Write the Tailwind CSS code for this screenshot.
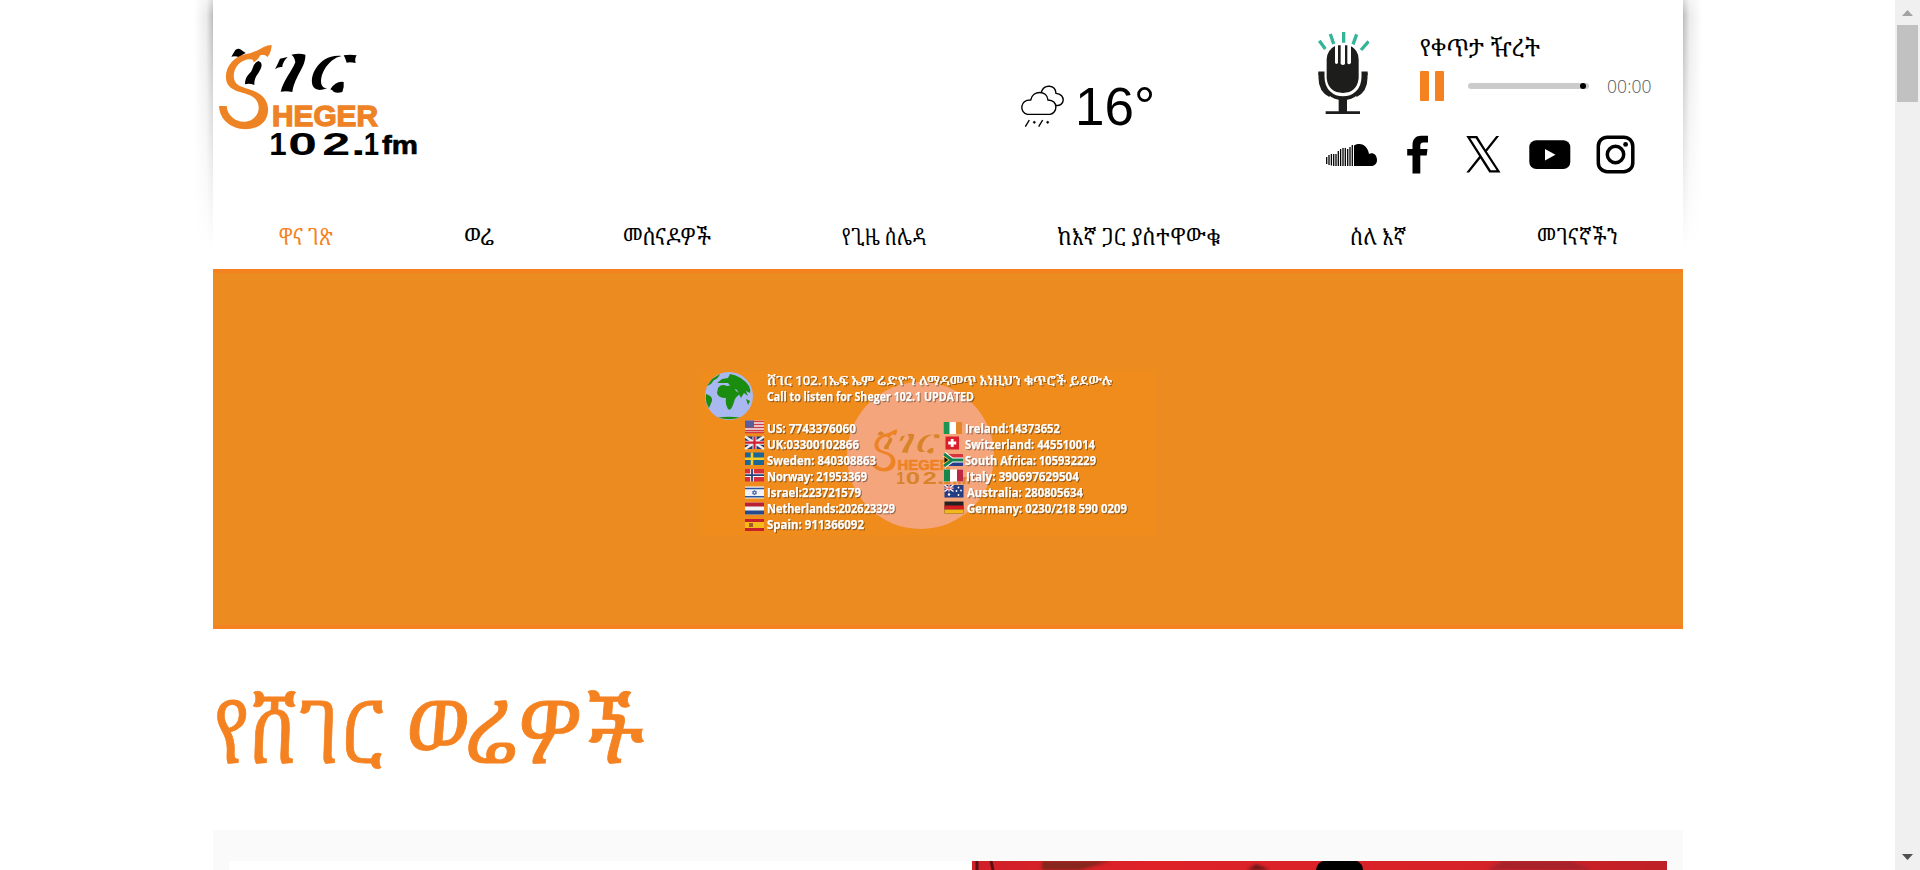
<!DOCTYPE html>
<html lang="am">
<head>
<meta charset="utf-8">
<title>ሸገር 102.1</title>
<script src="https://cdn.jsdelivr.net/npm/@tailwindcss/browser@4"></script>
</head>
<body class="bg-white text-black overflow-hidden font-['Noto_Serif_Ethiopic','Noto_Sans_Ethiopic','Noto_Sans',serif]">
<svg class="hidden">
  <symbol id="logo" viewBox="0 0 780 540">
    <g>
      <path d="M124 170L136 150Q146 142 154 150L167 159Q156 163 149 173Q136 166 124 170Z"/>
      <path d="M205 183Q219 188 213 204C205 224 192 230 193 255Q178 249 165 253C165 224 181 224 187 207Q190 190 205 183Z"/>
      <path d="M255 208Q264 190 270 176L293 171Q277 187 277 201Q264 200 255 208Z"/>
      <path d="M304 164Q328 158 346 164C348 201 315 225 307 276Q289 272 272 275C282 238 304 217 316 187Q314 171 304 164Z"/>
      <path d="M455 168C390 159 351 231 371 262Q382 277 411 265C381 263 391 211 425 182Q440 170 455 168Z"/>
      <path d="M461 166Q480 162 500 166Q493 177 497 189Q480 185 470 188Q466 174 461 166Z"/>
      <path d="M421 268Q437 242 461 246Q463 263 457 276Q442 281 432 276Q427 270 421 268Z"/>
      <g font-family="Liberation Sans" font-weight="700" font-size="94">
        <text x="238" y="464">1</text>
        <text x="295" y="464" textLength="86" lengthAdjust="spacingAndGlyphs">0</text>
        <text x="397" y="464" textLength="84" lengthAdjust="spacingAndGlyphs">2</text>
        <text x="483" y="464" textLength="44" lengthAdjust="spacingAndGlyphs">.</text>
        <text x="521" y="464" textLength="46" lengthAdjust="spacingAndGlyphs">1</text>
      </g>
      <text x="576" y="463" font-family="Liberation Sans" font-weight="700" font-size="80" textLength="108" lengthAdjust="spacingAndGlyphs" stroke="currentColor" stroke-width="2">fm</text>
    </g>
    <g fill="#ee8326">
      <path d="M245 135Q244 157 233 171Q222 161 211 166Q205 180 191 187Q190 177 180 178C150 178 127 207 132 235C137 268 180 260 213 285C247 312 238 366 202 380C150 402 89 373 87 318H110C112 354 151 376 184 360C211 344 213 310 192 293C166 273 118 279 109 242C101 203 132 169 168 162C193 157 207 149 221 141Q232 135 245 135Z"/>
      <text x="246" y="377" font-family="Liberation Sans" font-weight="700" font-size="90" textLength="318" lengthAdjust="spacingAndGlyphs" stroke="#ee8326" stroke-width="4">HEGER</text>
    </g>
  </symbol>
</svg>
<div class="flex h-[870px] w-[1920px]">
  <div class="relative flex w-[1895px] flex-col pl-[213px] pr-[212px]">
    <div class="absolute left-[194px] top-0 h-[250px] w-[19px] bg-linear-to-l from-[#bcbcbc] via-[#ebebeb] via-35% to-white [mask-image:linear-gradient(to_bottom,#0008,#000_6%,#0009_40%,#0004_70%,transparent)]"></div>
    <div class="absolute left-[1683px] top-0 h-[250px] w-[19px] bg-linear-to-r from-[#bcbcbc] via-[#ebebeb] via-35% to-white [mask-image:linear-gradient(to_bottom,#0008,#000_6%,#0009_40%,#0004_70%,transparent)]"></div>

    <header class="flex h-[200px] w-[1470px] items-start">
      <svg class="-ml-[23px] h-[180px] w-[260px] shrink-0 overflow-visible fill-black" viewBox="0 0 780 540"><use href="#logo"/></svg>
      <div class="ml-[570px] mt-[80px] flex h-[60px] w-[140px] items-start">
        <svg class="mt-[4px] h-[44px] w-[46px] shrink-0" viewBox="60 42 138 132" fill="none" stroke="#000" stroke-width="4.2">
          <path d="M82 133C58 128 59 89 92 90C98 60 141 60 144 90C177 92 172 130 150 133Z"/>
          <path d="M124 66C133 41 166 44 168 70C199 72 195 112 166 106"/>
          <path d="M88 150L76 170M128 150L116 170"/><circle cx="103" cy="157" r="3" fill="#000" stroke-width="2"/><circle cx="143" cy="157" r="3" fill="#000" stroke-width="2"/>
        </svg>
        <span class="ml-[9px] font-['Liberation_Sans',sans-serif] text-[53px] leading-[54px]">16°</span>
      </div>
      <div class="ml-[150px] flex w-[373px] flex-col">
        <div class="flex h-[122px] items-start pt-[30px]">
          <svg class="ml-[7px] h-[84px] w-[52px] shrink-0" viewBox="80 60 156 252">
            <g stroke="#35b597" stroke-width="10"><path d="M87 92L105 117M120 72L130 102M160 66V98M199 73L188 103M235 94L212 120"/></g>
            <path fill="#1d1d1b" d="M109 148Q110 120 134 108V158Q138 166 143 158V106H151V162Q158 168 164 162V106H171V160Q177 166 182 158V109Q204 120 205 148V205Q200 248 158 249Q114 248 109 205Z"/>
            <path fill="none" stroke="#1d1d1b" stroke-width="11" d="M84 190H97V200C97 286 219 286 219 200V190H232"/>
            <path d="M89 190V204C89 226 99 247 119 257M227 190V204C227 226 217 247 197 257" fill="none" stroke="#1d1d1b" stroke-width="9"/>
            <path fill="#1d1d1b" d="M145 262H170V304H209V312H106V304H145Z"/>
          </svg>
          <div class="ml-[51px] flex w-[240px] flex-col">
            <svg class="h-[41px] w-[130px] overflow-visible"><text x="0" y="25.500" font-size="24" textLength="120" lengthAdjust="spacingAndGlyphs">የቀጥታ ዥረት</text></svg>
            <div class="flex h-[30px] items-center">
              <span class="h-[30px] w-[9px] rounded-[1px] bg-[#f58220]"></span>
              <span class="ml-[6px] h-[30px] w-[9px] rounded-[1px] bg-[#f58220]"></span>
              <span class="ml-[24px] flex h-[6px] w-[121px] items-center justify-end rounded-full bg-[#cbcbcb] pr-[3px]"><i class="size-[6px] rounded-full bg-black"></i></span>
              <span class="ml-[18px] font-['Open_Sans'] text-[17.5px] font-light leading-[28px] tracking-[0.1px] text-[#555]">00:00</span>
            </div>
          </div>
        </div>
        <svg class="ml-[14px] mt-[12px] h-[42px] w-[316px]" viewBox="1324 134 316 42">
          <path d="M1354 166V145.500C1362 141 1368 147 1369 154C1373 152 1377 155 1377 160C1377 164 1374 166 1371 166Z"/>
          <path stroke="#000" stroke-width="1.300" d="M1326.700 157V164M1329 155V165M1331.400 154V165.500M1333.700 154V166M1336 154V166M1338.300 151V166M1340.600 149V166M1343 148V166M1345.300 148V166M1347.700 149V166M1350 147V166M1352.300 145V166"/>
          <path d="M1412.500 173.500V155.500H1407.200V149H1412.500V145C1412.500 139 1416 135.700 1421 135.700H1428V142.500H1423.500C1421 142.500 1420.300 144 1420.300 146V149H1427.500L1426.700 155.500H1420.300V173.500Z"/>
          <g transform="translate(1466.300 136) scale(1.440 1.520)"><path d="M14.300 10.200L22.800 0H20.800L13.400 8.800L7.600 0H0L8.900 13.400L0 24H2L9.800 14.800L16 24H23.800ZM2.800 1.500H6.500L21 22.500H17Z"/></g>
          <rect x="1529.300" y="140.300" width="41" height="28.700" rx="7"/><path fill="#fff" d="M1545 149L1555.500 154.700L1545 160.500Z"/>
          <rect x="1598.300" y="137.200" width="34.500" height="34.500" rx="9" fill="none" stroke="#000" stroke-width="3.500"/><circle cx="1615.500" cy="154.500" r="8.200" fill="none" stroke="#000" stroke-width="3.500"/><circle cx="1625.600" cy="144.400" r="2.400"/>
        </svg>
      </div>
    </header>

    <nav class="flex h-[69px] w-[1470px] items-start justify-between pl-[66px] pr-[65px] pt-[19px] text-[23px]">
      <svg class="h-[34px] w-[54px] overflow-visible fill-[#f58220]"><text y="26" textLength="54" lengthAdjust="spacingAndGlyphs">ዋና ገጽ</text></svg>
      <svg class="h-[34px] w-[29px] overflow-visible"><text y="26" textLength="30" lengthAdjust="spacingAndGlyphs">ወሬ</text></svg>
      <svg class="h-[34px] w-[88px] overflow-visible"><text y="26" textLength="88" lengthAdjust="spacingAndGlyphs">መሰናዶዎች</text></svg>
      <svg class="h-[34px] w-[84px] overflow-visible"><text y="26" textLength="84" lengthAdjust="spacingAndGlyphs">የጊዜ ሰሌዳ</text></svg>
      <svg class="h-[34px] w-[163px] overflow-visible"><text y="26" textLength="163" lengthAdjust="spacingAndGlyphs">ከእኛ ጋር ያስተዋውቁ</text></svg>
      <svg class="h-[34px] w-[56px] overflow-visible"><text y="26" textLength="56" lengthAdjust="spacingAndGlyphs">ስለ እኛ</text></svg>
      <svg class="h-[34px] w-[81px] overflow-visible"><text y="26" textLength="81" lengthAdjust="spacingAndGlyphs">መገናኛችን</text></svg>
    </nav>

    <section class="h-[360px] w-[1470px] border-y-4 border-[#f58220] bg-[#ec8c20]">
      <svg class="h-[352px] w-[1470px]" viewBox="213 273 1470 352">
        <rect x="702" y="371" width="453" height="164" fill="#f08c1c"/>
        <circle cx="920.500" cy="455.500" r="73.500" fill="#f4a57c"/>
        <g fill="#d9832a" color="#d9832a"><use href="#logo" x="856.500" y="407" width="130" height="90"/></g>
        <circle cx="729" cy="396" r="24" fill="#a9b8f0"/>
        <path fill="#1a8c10" d="M718 388Q721 383 727 386Q733 385 736 391L740 394Q735 397 734 402Q731 412 728 409Q725 404 726 398Q718 398 717 393ZM717 383L722 379L728 378L730 374Q742 376 749 386Q751 390 750 393L746 391L748 396L744 393L741 398L737 390L731 387L728 383L722 383ZM706 394Q713 396 712 401L709 408Q705 402 706 394ZM707 386L712 379L720 374Q718 379 714 380L711 384ZM718 417.500Q729 416 740 417.500Q729 421 718 417.500ZM746 399L750 401L748 405Z"/>
        <g stroke-width="0">
          <g transform="translate(745 420.500)"><rect width="19" height="12.500" fill="#eee"/><path d="M0 1H19M0 4H19M0 7H19M0 10H19M0 12H19" stroke="#d13c43" stroke-width="1.300"/><rect width="9" height="7" fill="#5a5f9c"/></g>
          <g transform="translate(745 436.500)"><rect width="19" height="12.500" fill="#263a7b"/><path d="M0 0L19 12.500M19 0L0 12.500" stroke="#eee" stroke-width="2.500"/><path d="M9.500 0V12.500M0 6.200H19" stroke="#eee" stroke-width="4"/><path d="M9.500 0V12.500M0 6.200H19" stroke="#cf2030" stroke-width="2.200"/></g>
          <g transform="translate(745 452.500)"><rect width="19" height="12.500" fill="#1b6699"/><path d="M7 0V12.500M0 6.200H19" stroke="#f5cc26" stroke-width="2.600"/></g>
          <g transform="translate(745 469)"><rect width="19" height="12.500" fill="#d8303a"/><path d="M7 0V12.500M0 6.200H19" stroke="#fff" stroke-width="3.600"/><path d="M7 0V12.500M0 6.200H19" stroke="#28407a" stroke-width="1.800"/></g>
          <g transform="translate(745 486.500)"><rect width="19" height="12" fill="#f2f2f5"/><path d="M0 2H19M0 10.300H19" stroke="#2c55a0" stroke-width="1.600"/><path d="M9.500 3.700L11.500 7.300H7.500ZM9.500 8.600L7.500 5H11.500Z" fill="none" stroke="#2c55a0" stroke-width=".7"/></g>
          <g transform="translate(745 502.500)"><rect width="19" height="12" fill="#f4f4f4"/><rect width="19" height="4" fill="#b82033"/><rect y="8" width="19" height="4" fill="#274a8d"/></g>
          <g transform="translate(745 519)"><rect width="19" height="12" fill="#c8202a"/><rect y="3" width="19" height="6" fill="#f5b91c"/><rect x="4" y="4" width="4" height="4" fill="#a15a28"/></g>
          <g transform="translate(943.500 422)"><rect width="18.500" height="12" fill="#fff"/><rect width="6" height="12" fill="#1c9550"/><rect x="12.500" width="6" height="12" fill="#e4862c"/></g>
          <g transform="translate(945.500 436.500)"><rect width="13.500" height="13" fill="#d8202c"/><path d="M6.700 2.500V10.500M2.700 6.500H10.700" stroke="#fff" stroke-width="2.800"/></g>
          <g transform="translate(944 454)"><rect width="19" height="12" fill="#d8343b"/><rect y="6" width="19" height="6" fill="#253d8c"/><path d="M0 0L8 6L0 12M7 6H19" stroke="#fff" stroke-width="5" fill="none"/><path d="M0 0L8 6L0 12M7 6H19" stroke="#158351" stroke-width="3" fill="none"/><path d="M0 2.500L5 6L0 9.500Z" fill="#111" stroke="#f0b92c" stroke-width=".8"/></g>
          <g transform="translate(944 469.500)"><rect width="19" height="12" fill="#fff"/><rect width="6" height="12" fill="#16864b"/><rect x="13" width="6" height="12" fill="#bd2741"/></g>
          <g transform="translate(944.500 485)"><rect width="19" height="12.500" fill="#263c83"/><path d="M0 0L9 6.500M9 0L0 6.500M4.500 0V6.500M0 3.200H9" stroke="#fff" stroke-width="1.400"/><path d="M4.500 0V6.500M0 3.200H9" stroke="#d8343b" stroke-width=".8"/><g fill="#fff"><circle cx="4.500" cy="9.500" r="1.200"/><circle cx="14" cy="2.500" r=".9"/><circle cx="16.500" cy="5.500" r=".9"/><circle cx="12" cy="6" r=".9"/><circle cx="14" cy="10" r=".9"/></g></g>
          <g transform="translate(944.500 501.500)"><rect width="19" height="12" fill="#222"/><rect y="4" width="19" height="4" fill="#d61c20"/><rect y="8" width="19" height="4" fill="#f5b81c"/></g>
        </g>
        <g class="fill-white stroke-white [stroke-width:0.25px] font-['Open_Sans','Noto_Serif_Ethiopic','Noto_Sans_Ethiopic',serif] text-[12.5px] font-bold [filter:drop-shadow(1px_1px_0.5px_#0006)]">
          <text x="767" y="384.500" font-size="13" font-weight="600" textLength="345" lengthAdjust="spacingAndGlyphs">ሸገር 102.1ኤፍ ኤም ሬድዮን ለማዳመጥ እነዚህን ቁጥሮች ይደውሉ</text>
          <text x="767" y="400.500" textLength="207" lengthAdjust="spacingAndGlyphs">Call to listen for Sheger 102.1 UPDATED</text>
          <text x="767" y="432.500" textLength="89" lengthAdjust="spacingAndGlyphs">US: 7743376060</text>
          <text x="767" y="448.500" textLength="92" lengthAdjust="spacingAndGlyphs">UK:03300102866</text>
          <text x="767" y="464.500" textLength="109" lengthAdjust="spacingAndGlyphs">Sweden: 840308863</text>
          <text x="767" y="480.500" textLength="100" lengthAdjust="spacingAndGlyphs">Norway: 21953369</text>
          <text x="767" y="496.500" textLength="94" lengthAdjust="spacingAndGlyphs">Israel:223721579</text>
          <text x="767" y="512.500" textLength="128" lengthAdjust="spacingAndGlyphs">Netherlands:202623329</text>
          <text x="767" y="528.500" textLength="97" lengthAdjust="spacingAndGlyphs">Spain: 911366092</text>
          <text x="965" y="432.500" textLength="95" lengthAdjust="spacingAndGlyphs">Ireland:14373652</text>
          <text x="965" y="448.500" textLength="130" lengthAdjust="spacingAndGlyphs">Switzerland: 445510014</text>
          <text x="965" y="464.500" textLength="131" lengthAdjust="spacingAndGlyphs">South Africa: 105932229</text>
          <text x="966" y="480.500" textLength="113" lengthAdjust="spacingAndGlyphs">Italy: 390697629504</text>
          <text x="967" y="496.500" textLength="116" lengthAdjust="spacingAndGlyphs">Australia: 280805634</text>
          <text x="967" y="512.500" textLength="160" lengthAdjust="spacingAndGlyphs">Germany: 0230/218 590 0209</text>
        </g>
      </svg>
    </section>

    <h1 class="h-[201px] w-[1470px] pt-[41px]">
      <svg class="h-[120px] w-[450px] overflow-visible fill-[#f58220] stroke-[#f58220]" stroke-width=".8" font-size="87">
        <text transform="translate(0 92.500) skewX(-2)" textLength="171" lengthAdjust="spacingAndGlyphs">የሸገር</text>
        <text transform="translate(190 92.500) skewX(-5)" textLength="240" lengthAdjust="spacingAndGlyphs">ወሬዎች</text>
      </svg>
    </h1>

    <section class="flex h-[40px] w-[1470px] bg-[#fafafa] px-[16px] pt-[31px]">
      <div class="h-[9px] w-[743px] bg-white"></div>
      <svg class="h-[9px] w-[695px]" viewBox="0 0 695 9">
        <defs><linearGradient id="r"><stop stop-color="#d02028"/><stop offset=".25" stop-color="#de2228"/><stop offset=".7" stop-color="#d62228"/><stop offset="1" stop-color="#bd2026"/></linearGradient><filter id="b"><feGaussianBlur stdDeviation="1.500"/></filter></defs>
        <rect width="695" height="9" fill="url(#r)"/>
        <path d="M5 0V9M19 0L21 9" stroke="#5c1014" stroke-width="3"/>
        <g filter="url(#b)"><path d="M70 0H139L122 5L108 9H70Z" fill="#86261f"/><path d="M275 9L284 3L298 9Z" fill="#6b1518"/><path d="M530 0H600L620 9H515Z" fill="#a8242a"/></g>
        <path d="M344 9Q345 2 351 0H385Q391 3 391 9Z"/>
      </svg>
    </section>
  </div>
  <aside class="flex w-[25px] flex-col items-center bg-[#f0f0f0]">
    <svg class="h-[25px] w-[25px]"><path fill="#a3a3a3" d="M7 16L12.500 10L18 16Z"/></svg>
    <div class="h-[77px] w-[21px] bg-[#c1c1c1]"></div>
    <svg class="mt-auto h-[25px] w-[25px]"><path fill="#505050" d="M7 9L12.500 15L18 9Z"/></svg>
  </aside>
</div>
</body>
</html>
